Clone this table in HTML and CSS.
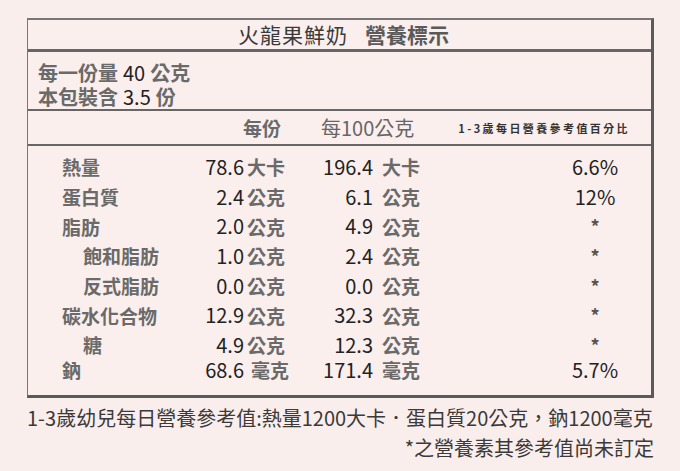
FILE: index.html
```html
<!DOCTYPE html>
<html lang="zh-Hant">
<head>
<meta charset="utf-8">
<title>火龍果鮮奶 營養標示</title>
<link rel="stylesheet" href="styles.css">
</head>
<body>
<div class="panel">
  <div class="title"><span class="name">火龍果鮮奶</span><span class="label">營養標示</span></div>
  <div class="serving">
    <div class="line"><span class="k">每一份量</span><span class="v">40</span><span class="k">公克</span></div>
    <div class="line"><span class="k">本包裝含</span><span class="v">3.5</span><span class="k">份</span></div>
  </div>
  <div class="head">
    <span class="h1">每份</span>
    <span class="h2">每100公克</span>
    <span class="h3">1-3歲每日營養參考值百分比</span>
  </div>
  <div class="body">
    <div class="row"><span class="lab">熱量</span><span class="n1">78.6</span><span class="u1">大卡</span><span class="n2">196.4</span><span class="u2">大卡</span><span class="pct">6.6%</span></div>
    <div class="row"><span class="lab">蛋白質</span><span class="n1">2.4</span><span class="u1">公克</span><span class="n2">6.1</span><span class="u2">公克</span><span class="pct">12%</span></div>
    <div class="row"><span class="lab">脂肪</span><span class="n1">2.0</span><span class="u1">公克</span><span class="n2">4.9</span><span class="u2">公克</span><span class="pct star">*</span></div>
    <div class="row"><span class="lab sub">飽和脂肪</span><span class="n1">1.0</span><span class="u1">公克</span><span class="n2">2.4</span><span class="u2">公克</span><span class="pct star">*</span></div>
    <div class="row"><span class="lab sub">反式脂肪</span><span class="n1">0.0</span><span class="u1">公克</span><span class="n2">0.0</span><span class="u2">公克</span><span class="pct star">*</span></div>
    <div class="row"><span class="lab">碳水化合物</span><span class="n1">12.9</span><span class="u1">公克</span><span class="n2">32.3</span><span class="u2">公克</span><span class="pct star">*</span></div>
    <div class="row"><span class="lab sub">糖</span><span class="n1">4.9</span><span class="u1">公克</span><span class="n2">12.3</span><span class="u2">公克</span><span class="pct star">*</span></div>
    <div class="row last"><span class="lab">鈉</span><span class="n1">68.6</span><span class="u1 sp">毫克</span><span class="n2">171.4</span><span class="u2">毫克</span><span class="pct">5.7%</span></div>
  </div>
</div>
<div class="foot">
  <p class="f1">1-3歲幼兒每日營養參考值:熱量1200大卡．蛋白質20公克，鈉1200毫克</p>
  <p class="f2">*之營養素其參考值尚未訂定</p>
</div>
</body>
</html>
```

FILE: styles.css
```css
html, body {
  margin: 0;
  padding: 0;
}
body {
  background: #faeeec;
  font-family: "Noto Sans CJK TC", "Noto Sans", sans-serif;
  color: #333;
  width: 680px;
  height: 471px;
  overflow: hidden;
}
.panel {
  box-sizing: border-box;
  margin: 18px 0 0 27px;
  width: 627px;
  background: #fbefed;
  border-left: 1px solid #777;
  border-top: 2px solid #777;
  border-right: 3px solid #5a5a5a;
  border-bottom: 3px solid #5a5a5a;
}
.title {
  height: 29px;
  display: flex;
  align-items: center;
  justify-content: center;
  padding-left: 8px;
  font-size: 21px;
  line-height: 1;
  border-bottom: 3px solid #666;
}
.title .name {
  color: #3a3a3a;
  letter-spacing: 1px;
}
.title .label {
  margin-left: 17px;
  color: #5a5a5a;
  font-weight: bold;
}
.serving {
  height: 59px;
  box-sizing: border-box;
  padding: 9px 0 0 10px;
  font-size: 20px;
  border-bottom: 2px solid #666;
}
.line {
  display: flex;
  align-items: center;
  gap: 5px;
  height: 24px;
  line-height: 22px;
}
.serving .k {
  color: #6a6a6a;
  font-weight: bold;
}
.serving .v {
  color: #222;
}
.head {
  height: 33px;
  display: flex;
  align-items: center;
  padding-left: 215px;
  font-size: 20px;
  color: #6a6a6a;
  border-bottom: 2px solid #666;
}
.head .h1 {
  font-size: 19px;
  font-weight: bold;
}
.head .h2 {
  margin-left: 40px;
  color: #666;
}
.head .h3 {
  margin-left: 44px;
  font-size: 11px;
  letter-spacing: 2.4px;
  font-weight: bold;
  color: #333;
}
.body {
  padding: 6px 0 15px 0;
}
.row {
  display: grid;
  grid-template-columns: 172px 44px 56px 73px 67px 1fr 80px 16px;
  height: 29.7px;
  align-items: center;
  font-size: 19px;
  line-height: 1;
}
.row.last {
  height: 20px;
}
.lab {
  padding-left: 34px;
  color: #6a6a6a;
  font-weight: bold;
}
.lab.sub {
  padding-left: 55px;
}
.n1, .n2 {
  text-align: right;
  color: #222;
  font-size: 20px;
}
.u1 {
  padding-left: 3px;
  color: #6a6a6a;
  font-weight: bold;
}
.u1.sp {
  padding-left: 7px;
}
.u2 {
  padding-left: 9px;
  color: #6a6a6a;
  font-weight: bold;
}
.pct {
  grid-column: 7;
  text-align: center;
  color: #222;
  font-size: 20px;
}
.pct.star {
  font-size: 18px;
  font-weight: bold;
  color: #555;
}
.foot {
  width: 627px;
  margin-left: 27px;
  padding-top: 5px;
  color: #3a3a3a;
  font-size: 20px;
  line-height: 30px;
}
.foot p {
  margin: 0;
}
.f1 {
  white-space: nowrap;
}
.f2 {
  text-align: right;
}
```
